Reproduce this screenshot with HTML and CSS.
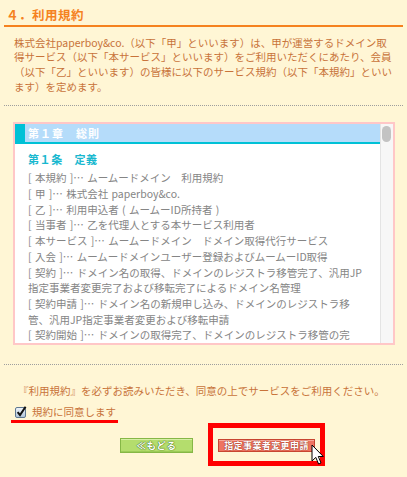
FILE: index.html
```html
<!DOCTYPE html>
<html lang="ja">
<head>
<meta charset="utf-8">
<title>利用規約</title>
<link rel="stylesheet" href="styles.css">
</head>
<body>
<div class="page">
  <h2 class="sec-title">４．利用規約</h2>
  <p class="intro">株式会社paperboy&amp;co.（以下「甲」といいます）は、甲が運営するドメイン取<br>得サービス（以下「本サービス」といいます）をご利用いただくにあたり、会員<br>（以下「乙」といいます）の皆様に以下のサービス規約（以下「本規約」といい<br>ます）を定めます。</p>
  <hr class="dots">
  <div class="terms">
    <div class="terms-body">
      <div class="chapter"><span class="chapter-mark"></span><span class="chapter-text">第１章　総則</span></div>
      <div class="article">
        <h3 class="article-title">第１条　定義</h3>
        <p class="def">[ 本規約 ]… ムームードメイン　利用規約</p>
        <p class="def">[ 甲 ]… 株式会社 paperboy&amp;co.</p>
        <p class="def">[ 乙 ]… 利用申込者 ( ムームーID所持者 )</p>
        <p class="def">[ 当事者 ]… 乙を代理人とする本サービス利用者</p>
        <p class="def">[ 本サービス ]… ムームードメイン　ドメイン取得代行サービス</p>
        <p class="def">[ 入会 ]… ムームードメインユーザー登録およびムームーID取得</p>
        <p class="def">[ 契約 ]… ドメイン名の取得、ドメインのレジストラ移管完了、汎用JP<br>指定事業者変更完了および移転完了によるドメイン名管理</p>
        <p class="def">[ 契約申請 ]… ドメイン名の新規申し込み、ドメインのレジストラ移<br>管、汎用JP指定事業者変更および移転申請</p>
        <p class="def">[ 契約開始 ]… ドメインの取得完了、ドメインのレジストラ移管の完</p>
      </div>
    </div>
    <div class="scrollbar"><div class="thumb"></div></div>
  </div>
  <hr class="dots dots-low">
  <p class="notice">『利用規約』を必ずお読みいただき、同意の上でサービスをご利用ください。</p>
  <label class="agree">
    <svg class="checkbox" width="12" height="12" viewBox="0 0 12 12">
      <defs>
        <linearGradient id="cbg" x1="0" y1="0" x2="0" y2="1">
          <stop offset="0" stop-color="#F2F6FB"/>
          <stop offset="1" stop-color="#AFC3D8"/>
        </linearGradient>
      </defs>
      <rect x="0.5" y="1.5" width="10" height="10" rx="1.5" fill="url(#cbg)" stroke="#5F7891"/>
      <path d="M2.6 6.2 L5 9 L10.6 0.8" fill="none" stroke="#111" stroke-width="2"/>
    </svg>
    <span class="agree-text">規約に同意します</span>
  </label>
  <div class="actions">
    <button class="btn btn-back" type="button">≪もどる</button>
    <div class="highlight">
      <button class="btn btn-apply" type="button">指定事業者変更申請</button>
      <svg class="cursor" width="14" height="22" viewBox="0 0 14 22">
        <path d="M1 1 L1 17 L4.8 13.4 L7.6 20 L10 19 L7.3 12.5 L12.3 12.5 Z" fill="#fff" stroke="#000" stroke-width="1" stroke-linejoin="round"/>
      </svg>
    </div>
  </div>
</div>
</body>
</html>
```

FILE: styles.css
```css
html, body {
  margin: 0;
  padding: 0;
}

body {
  background: #FFF6D5;
  font-family: "Noto Sans CJK JP", "Noto Sans", sans-serif;
}

.page {
  padding: 0 4px;
}

.sec-title {
  margin: 0;
  padding: 7px 0 3px 2px;
  font-size: 12.5px;
  line-height: 15px;
  font-weight: bold;
  color: #F5821F;
  letter-spacing: 0.5px;
  border-bottom: 2px solid #F5821F;
}

.intro {
  margin: 8.5px 0 0;
  padding: 0 10px;
  font-size: 10.5px;
  line-height: 14.7px;
  color: #C8733A;
  white-space: nowrap;
}

.dots {
  margin: 11px 0 0;
  height: 0;
  border: 0;
  border-top: 1px dotted #9E9E9E;
}

.dots-low {
  margin-top: 19px;
}

.terms {
  display: flex;
  margin: 16px 8px 0 9px;
  height: 219px;
  border: 2px solid #FFC7C7;
  background: #fff;
}

.terms-body {
  flex: 1;
  overflow: hidden;
}

.chapter {
  display: flex;
  height: 18px;
  background: #B5DCFA;
  border-bottom: 2px solid #00C1D6;
}

.chapter-mark {
  width: 10px;
  background: #00C1D6;
}

.chapter-text {
  padding-left: 3px;
  font-size: 11px;
  line-height: 18px;
  font-weight: bold;
  color: #fff;
  letter-spacing: 1px;
}

.article {
  padding: 8px 0 0 13px;
}

.article-title {
  margin: 0 0 2.3px;
  font-size: 11px;
  line-height: 15.7px;
  font-weight: bold;
  color: #19B8CF;
  letter-spacing: 0.6px;
}

.def {
  margin: 0;
  font-size: 10.5px;
  line-height: 15.7px;
  color: #858585;
  white-space: nowrap;
  word-spacing: 1px;
}

.scrollbar {
  width: 13px;
  box-sizing: border-box;
  padding: 2px 2px 0 1px;
  background: #F7F7F7;
  border-left: 1px solid #E4E4E4;
}

.thumb {
  height: 16px;
  border-radius: 5px;
  background: #C3C3C3;
}

.notice {
  margin: 17.5px 0 0;
  padding-left: 14px;
  font-size: 10.5px;
  line-height: 15px;
  color: #C8733A;
  white-space: nowrap;
}

.agree {
  display: flex;
  align-items: center;
  gap: 5px;
  width: fit-content;
  margin: 6.5px 0 0 7px;
  padding: 0 2px 1px 4px;
  border-bottom: 3px solid #FF0000;
}

.checkbox {
  display: block;
}

.agree-text {
  font-size: 10.5px;
  line-height: 15px;
  color: #C8733A;
}

.actions {
  display: flex;
  align-items: center;
  padding-left: 116px;
}

.btn {
  display: block;
  box-sizing: border-box;
  margin: 0;
  padding: 0;
  font-family: "Noto Sans CJK JP", "Noto Sans", sans-serif;
  font-weight: bold;
  color: #fff;
  text-align: center;
  cursor: pointer;
}

.btn-back {
  width: 73px;
  height: 15px;
  margin: 1px 15px 0 0;
  font-size: 9.5px;
  line-height: 13px;
  letter-spacing: 0.5px;
  background: #B4DD6D;
  border: 1px solid #86B746;
  box-shadow: inset 0 1px 0 #D6EFA6, inset 0 -1px 0 #9CCB58;
  text-shadow: 0 0 1px #4F7D1E, 0 0 1px #4F7D1E, 0 0 1px #4F7D1E;
}

.highlight {
  position: relative;
  padding: 11px 5px 9px;
  border: 5px solid #FF0000;
}

.btn-apply {
  width: 97px;
  height: 13px;
  font-size: 9px;
  line-height: 11px;
  letter-spacing: 0.4px;
  background: #EE7461;
  border: 1px solid #C84631;
  box-shadow: inset 0 1px 0 #F7A899;
  text-shadow: 0 0 1px #8C2A19, 0 0 1px #8C2A19;
}

.cursor {
  position: absolute;
  left: 98px;
  top: 16px;
}
```
